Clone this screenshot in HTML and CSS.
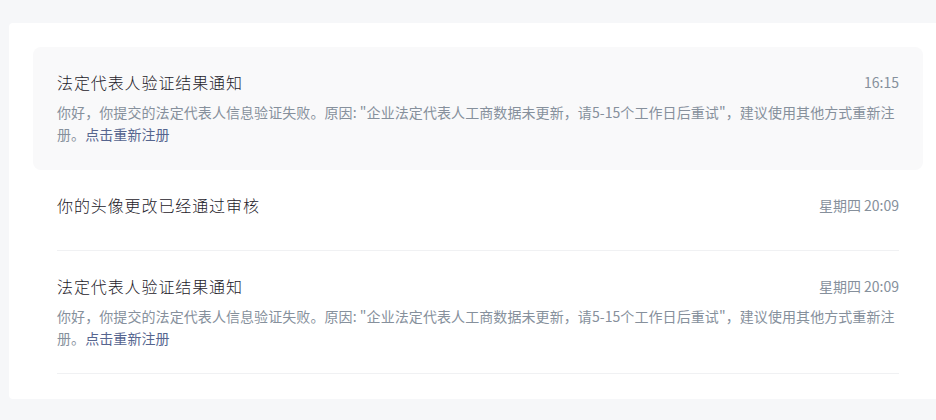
FILE: index.html
```html
<!DOCTYPE html>
<html lang="zh-CN">
<head>
<meta charset="utf-8">
<title>消息通知</title>
<link rel="stylesheet" href="styles.css">
</head>
<body>
<div class="page">
  <div class="card">
    <div class="item item--active">
      <div class="item-inner">
        <div class="item-head">
          <div class="item-title">法定代表人验证结果通知</div>
          <div class="item-time">16:15</div>
        </div>
        <p class="item-desc">你好，你提交的法定代表人信息验证失败。原因: "企业法定代表人工商数据未更新，请5-15个工作日后重试"，建议使用其他方式重新注册。<a class="item-link" href="#">点击重新注册</a></p>
      </div>
    </div>
    <div class="item">
      <div class="item-inner item-inner--plain">
        <div class="item-head">
          <div class="item-title">你的头像更改已经通过审核</div>
          <div class="item-time">星期四 20:09</div>
        </div>
      </div>
    </div>
    <div class="item">
      <div class="item-inner">
        <div class="item-head">
          <div class="item-title">法定代表人验证结果通知</div>
          <div class="item-time">星期四 20:09</div>
        </div>
        <p class="item-desc">你好，你提交的法定代表人信息验证失败。原因: "企业法定代表人工商数据未更新，请5-15个工作日后重试"，建议使用其他方式重新注册。<a class="item-link" href="#">点击重新注册</a></p>
      </div>
    </div>
  </div>
</div>
</body>
</html>
```
FILE: styles.css
```css
html, body {
  margin: 0;
  padding: 0;
  background: #f6f7f9;
  font-family: "Noto Sans CJK SC", "Noto Sans", sans-serif;
}

.page {
  padding: 23px 0 0 9px;
  height: 420px;
  box-sizing: border-box;
  overflow: hidden;
}

.card {
  background: #ffffff;
  padding: 24px 13px 25px 24px;
  border-radius: 4px 0 0 4px;
}

.item {
  padding: 0 24px;
  border-radius: 8px;
}

.item--active {
  background: #f9f9fa;
}

.item-inner {
  padding: 24px 0;
  border-bottom: 1px solid #f0f1f3;
}

.item--active .item-inner {
  border-bottom-color: transparent;
}

.item-inner--plain {
  padding-bottom: 34px;
}

.item-head {
  display: flex;
  justify-content: space-between;
  align-items: center;
  height: 22px;
}

.item-title {
  font-size: 16px;
  line-height: 22px;
  letter-spacing: 0.9px;
  font-weight: 300;
  color: #1d2129;
}

.item-time {
  font-size: 14px;
  line-height: 22px;
  color: #86909c;
}

.item-desc {
  margin: 8px 0 0;
  font-size: 14px;
  line-height: 22px;
  letter-spacing: 0.08px;
  color: #86909c;
}

.item-link {
  color: #56658f;
  text-decoration: none;
}
```
